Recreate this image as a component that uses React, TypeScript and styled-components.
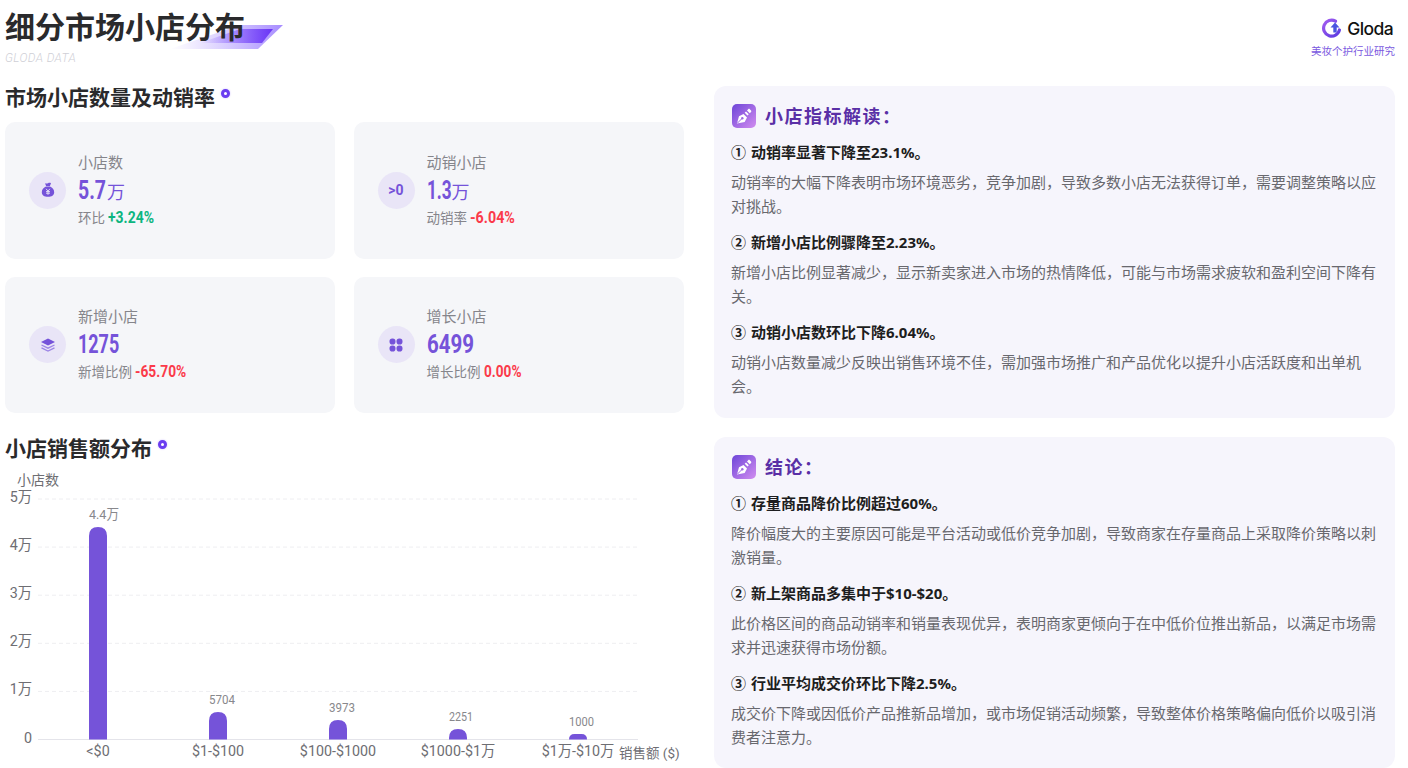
import React from "react";
import styled, { createGlobalStyle } from "styled-components";

const CJK = `"Noto Sans", "Noto Sans CJK SC", sans-serif`;
const NUM = `Roboto, "Noto Sans CJK SC", sans-serif`;

const Global = createGlobalStyle`
  html, body { margin: 0; padding: 0; background: #fff; overflow: hidden; }
  body { font-family: ${CJK}; }
  * { box-sizing: border-box; }
`;

const Page = styled.div`
  width: 1408px;
  height: 768px;
  padding: 0 13px 0 5px;
  display: flex;
  flex-direction: column;
  overflow: hidden;
`;
const Header = styled.header`
  height: 86px;
  display: flex;
  justify-content: space-between;
  align-items: flex-start;
`;
const TitleBlock = styled.div`
  position: relative;
  padding-top: 8px;
`;
const TitleDecor = styled.svg`
  position: absolute;
  left: 165px;
  top: 25px;
`;
const Title = styled.h1`
  position: relative;
  margin: 0;
  font-size: 30px;
  line-height: 38px;
  font-weight: 700;
  color: #2a2a2c;
`;
const SubTitle = styled.div`
  margin-top: 4px;
  font-family: Roboto, sans-serif;
  font-style: italic;
  font-weight: 300;
  font-size: 12px;
  line-height: 16px;
  letter-spacing: 0.4px;
  color: #cfcfd6;
`;
const Brand = styled.div`
  padding-top: 17px;
  display: flex;
  flex-direction: column;
  align-items: flex-end;
`;
const BrandRow = styled.div`
  display: flex;
  align-items: center;
  gap: 5px;
  height: 23px;
  margin-right: 2px;
`;
const BrandName = styled.span`
  font-family: Inter, sans-serif;
  font-weight: 500;
  font-size: 17.5px;
  letter-spacing: -0.6px;
  color: #111;
`;
const BrandSub = styled.div`
  margin-top: 4px;
  font-size: 10.5px;
  line-height: 15px;
  color: #7a58e0;
`;
const Columns = styled.div`
  flex: 1;
  display: grid;
  grid-template-columns: 679px 681px;
  column-gap: 30px;
`;
const Left = styled.div`
  display: flex;
  flex-direction: column;
`;
const SectionTitle = styled.h2`
  margin: 0;
  height: 22px;
  display: flex;
  align-items: center;
  gap: 6px;
  font-size: 21px;
  line-height: 22px;
  font-weight: 700;
  color: #2a2a2c;
`;
const Dot = styled.i`
  align-self: flex-start;
  margin-top: 2.5px;
  width: 9px;
  height: 9px;
  border-radius: 50%;
  border: 3px solid #6a3df0;
  background: #fff;
  box-shadow: 0 0 2px #c9b8ff;
`;
const Cards = styled.div`
  margin-top: 14px;
  display: grid;
  grid-template-columns: 330px 330.5px;
  grid-auto-rows: 136.5px;
  column-gap: 18.5px;
  row-gap: 18px;
`;
const Card = styled.div`
  background: #f5f6f9;
  border-radius: 10px;
  padding-left: 24px;
  display: flex;
  align-items: center;
  gap: 12px;
`;
const IconCircle = styled.div`
  flex: none;
  width: 37px;
  height: 37px;
  border-radius: 50%;
  background: #e9e5f7;
  color: #7553d9;
  display: flex;
  align-items: center;
  justify-content: center;
`;
const GtZero = styled.span`
  font-family: Roboto, sans-serif;
  font-size: 14px;
  font-weight: 700;
`;
const CardText = styled.div`
  display: flex;
  flex-direction: column;
  margin-top: -2px;
`;
const CardLabel = styled.div`
  font-size: 15px;
  line-height: 22px;
  color: #85858b;
`;
const CardValue = styled.div`
  display: flex;
  align-items: baseline;
  gap: 1px;
  height: 35px;
  line-height: 34px;
  color: #7553d9;
`;
const NarrowBox = styled.span<{ $w: number }>`
  display: inline-block;
  width: ${(p) => p.$w}px;
  white-space: nowrap;
`;
const NarrowText = styled.span<{ $sx: number }>`
  display: inline-block;
  transform: scaleX(${(p) => p.$sx});
  transform-origin: left center;
`;
const ValueNum = styled(NarrowBox)`
  font-family: ${NUM};
  font-size: 26px;
  font-weight: 700;
`;
const ValueUnit = styled.span`
  font-size: 18px;
  font-weight: 400;
`;
const CardSub = styled.div`
  display: flex;
  align-items: baseline;
  gap: 3px;
  font-size: 13.5px;
  line-height: 20px;
  color: #85858b;
`;
const Pct = styled(NarrowBox)<{ $up?: boolean }>`
  font-family: ${NUM};
  font-size: 16.5px;
  font-weight: 700;
  color: ${(p) => (p.$up ? "#0cb57f" : "#fb3a4a")};
`;
const ChartSection = styled.section`
  margin-top: 24px;
`;
const ChartSvg = styled.svg`
  display: block;
  margin-left: -5px;
  margin-top: 11px;
`;
const AxisText = styled.text<{ $size?: number }>`
  font-family: Roboto, "Noto Sans CJK SC", sans-serif;
  font-size: ${(p) => p.$size ?? 14.3}px;
  fill: #6e6e73;
`;
const ValueText = styled.text`
  font-family: ${NUM};
  font-size: 13.5px;
  fill: #88888c;
`;
const Right = styled.div`
  display: flex;
  flex-direction: column;
  gap: 19px;
`;
const Panel = styled.section`
  height: 331px;
  background: #f6f5fc;
  border-radius: 12px;
  padding: 18px 17px 0;
  &:first-child {
    height: 332px;
  }
`;
const PanelHeader = styled.div`
  display: flex;
  align-items: center;
  gap: 9px;
  height: 24px;
  margin: 0 0 12px 1px;
`;
const PanelTitle = styled.h3`
  margin: 0 0 2px;
  font-size: 18px;
  font-weight: 700;
  letter-spacing: 1.5px;
  color: #5a2fa6;
`;
const ItemHead = styled.div`
  font-size: 15px;
  line-height: 25px;
  font-weight: 700;
  color: #1d1d20;
  margin-bottom: 5px;
`;
const CircleNum = styled.span`
  display: inline-block;
  width: 20px;
`;
const ItemBody = styled.p`
  margin: 0 0 12px;
  font-size: 15px;
  line-height: 24px;
  color: #68686e;
`;

const Logo = () => (
  <svg width="21" height="21" viewBox="0 0 21 21">
    <defs>
      <linearGradient id="lg" x1="0" y1="0" x2="1" y2="1">
        <stop offset="0" stopColor="#a35cf0" />
        <stop offset="1" stopColor="#5a3ae0" />
      </linearGradient>
    </defs>
    <path d="M14.5 3.2A8 8 0 1 0 18.4 12" fill="none" stroke="url(#lg)" strokeWidth="3.2" strokeLinecap="round" />
    <path d="M14 4.500L9.500 9.500h2.800v5h3.400v-5h2.800z" fill="#4a55e0" />
  </svg>
);

const Bag = () => (
  <svg width="16" height="16" viewBox="0 0 16 16">
    <path d="M5 1.200c1 .5 2 .5 3 0s2-.5 3 0L9.900 4H6.100z" fill="currentColor" />
    <path d="M6 4.600h4c2.400 1 4.200 3.200 4.200 5.600 0 3-2.500 4.600-6.200 4.600s-6.200-1.600-6.200-4.600C1.800 7.800 3.600 5.600 6 4.600z" fill="currentColor" />
    <path d="M6.100 6.800L8 9.200l1.900-2.400M6 9.600h4M6 11.200h4M8 9.200v3.600" fill="none" stroke="#e9e5f7" strokeWidth="0.9" />
  </svg>
);
const Layers = () => (
  <svg width="16" height="16" viewBox="0 0 16 16">
    <path d="M8 1.500l7 3.500-7 3.500-7-3.500z" fill="currentColor" />
    <path d="M1.500 8L8 11.200 14.500 8M1.500 10.800L8 14l6.500-3.200" fill="none" stroke="#9d85e6" strokeWidth="1.300" />
  </svg>
);
const Blobs = () => (
  <svg width="14" height="14" viewBox="0 0 14 14" fill="currentColor">
    <rect x="0.500" y="0.500" width="6" height="6" rx="2.800" />
    <rect x="7.500" y="0.500" width="6" height="6" rx="2.800" />
    <rect x="0.500" y="7.500" width="6" height="6" rx="2.800" />
    <rect x="7.500" y="7.500" width="6" height="6" rx="2.800" />
  </svg>
);
const PenBadge = ({ id }: { id: string }) => (
  <svg width="24" height="24" viewBox="0 0 24 24">
    <defs>
      <linearGradient id={id} x1="0" y1="0" x2="1" y2="1">
        <stop offset="0" stopColor="#6d45d8" />
        <stop offset="1" stopColor="#d28df0" />
      </linearGradient>
    </defs>
    <rect width="24" height="24" rx="5" fill={`url(#${id})`} />
    <path d="M5 19.500l2-7.200 4.500-2.300 3.500 3.500-2.300 4.500z" fill="#fff" />
    <path d="M5.500 19l4.300-4.300" stroke="#9a68e4" strokeWidth="1" />
    <circle cx="10.300" cy="14.200" r="1.200" fill="#9a68e4" />
    <path d="M12.700 8.700l2.800 2.800 1.300-1.300-2.800-2.800zM15 6.400l2.800 2.800 1.200-1.200c.5-.5.500-1.100 0-1.600l-1.200-1.200c-.5-.5-1.100-.5-1.600 0z" fill="#fff" />
  </svg>
);

type CardData = {
  label: string;
  value: string;
  valueW: number;
  valueSx: number;
  unit?: string;
  sub: string;
  pct: string;
  pctW: number;
  pctSx: number;
  up?: boolean;
  icon: React.ReactNode;
};
const cards: CardData[] = [
  { label: "小店数", value: "5.7", valueW: 28, valueSx: 0.75, unit: "万", sub: "环比", pct: "+3.24%", pctW: 46, pctSx: 0.845, up: true, icon: <Bag /> },
  { label: "动销小店", value: "1.3", valueW: 24, valueSx: 0.66, unit: "万", sub: "动销率", pct: "-6.04%", pctW: 44, pctSx: 0.865, icon: <GtZero>&gt;0</GtZero> },
  { label: "新增小店", value: "1275", valueW: 41, valueSx: 0.69, sub: "新增比例", pct: "-65.70%", pctW: 50, pctSx: 0.835, icon: <Layers /> },
  { label: "增长小店", value: "6499", valueW: 47, valueSx: 0.79, sub: "增长比例", pct: "0.00%", pctW: 38, pctSx: 0.825, icon: <Blobs /> },
];

const panels = [
  {
    id: "p1",
    title: "小店指标解读：",
    items: [
      ["①", "动销率显著下降至23.1%。", "动销率的大幅下降表明市场环境恶劣，竞争加剧，导致多数小店无法获得订单，需要调整策略以应对挑战。"],
      ["②", "新增小店比例骤降至2.23%。", "新增小店比例显著减少，显示新卖家进入市场的热情降低，可能与市场需求疲软和盈利空间下降有关。"],
      ["③", "动销小店数环比下降6.04%。", "动销小店数量减少反映出销售环境不佳，需加强市场推广和产品优化以提升小店活跃度和出单机会。"],
    ],
  },
  {
    id: "p2",
    title: "结论：",
    items: [
      ["①", "存量商品降价比例超过60%。", "降价幅度大的主要原因可能是平台活动或低价竞争加剧，导致商家在存量商品上采取降价策略以刺激销量。"],
      ["②", "新上架商品多集中于$10-$20。", "此价格区间的商品动销率和销量表现优异，表明商家更倾向于在中低价位推出新品，以满足市场需求并迅速获得市场份额。"],
      ["③", "行业平均成交价环比下降2.5%。", "成交价下降或因低价产品推新品增加，或市场促销活动频繁，导致整体价格策略偏向低价以吸引消费者注意力。"],
    ],
  },
];

const bars = [
  { x: 98, top: 527, label: "4.4万", cat: "<$0", lx: 104, lw: 30 },
  { x: 218, top: 712, label: "5704", cat: "$1-$100", lx: 222, lw: 26 },
  { x: 338, top: 720, label: "3973", cat: "$100-$1000", lx: 342, lw: 26 },
  { x: 458, top: 729, label: "2251", cat: "$1000-$1万", lx: 461, lw: 24 },
  { x: 578, top: 734, label: "1000", cat: "$1万-$10万", lx: 581.500, lw: 25 },
];
const ticks = ["5万", "4万", "3万", "2万", "1万", "0"];
const Y0 = 470;

const Chart = () => (
  <ChartSvg width="690" height="298" viewBox={`0 ${Y0} 690 298`}>
    <AxisText x="17" y={485} $size={14}>小店数</AxisText>
    {ticks.map((t, i) => {
      const y = 499 + i * 48.1;
      return (
        <g key={t}>
          {i < 5 ? (
            <line x1="38" x2="638" y1={y} y2={y} stroke="#eeeef1" strokeWidth="1" strokeDasharray="4 3" />
          ) : (
            <line x1="38" x2="638" y1={739.5} y2={739.5} stroke="#e4e4ea" strokeWidth="1" />
          )}
          <AxisText x="32" y={y + 3} textAnchor="end">{t}</AxisText>
        </g>
      );
    })}
    {bars.map((b) => {
      const h = 739.5 - b.top;
      const r = Math.min(9, h);
      return (
        <g key={b.cat}>
          <path
            d={`M${b.x - 9} 739.5V${b.top + r}Q${b.x - 9} ${b.top} ${b.x - 9 + r} ${b.top}H${b.x + 9 - r}Q${b.x + 9} ${b.top} ${b.x + 9} ${b.top + r}V739.5Z`}
            fill="#7553d9"
          />
          <ValueText x={b.lx} y={b.top - 8} textAnchor="middle" textLength={b.lw} lengthAdjust="spacingAndGlyphs">{b.label}</ValueText>
          <AxisText x={b.x} y={756} textAnchor="middle">{b.cat}</AxisText>
        </g>
      );
    })}
    <AxisText x="619" y="758" $size={13.5}>销售额 ($)</AxisText>
  </ChartSvg>
);

export default function App() {
  return (
    <>
      <Global />
      <Page>
        <Header>
          <TitleBlock>
            <TitleDecor width="114" height="25" viewBox="0 0 114 25">
              <defs>
                <linearGradient id="d1" x1="0" x2="1" y1="0" y2="0">
                  <stop offset="0" stopColor="#b9a5ff" stopOpacity="0" />
                  <stop offset="1" stopColor="#a78cff" />
                </linearGradient>
                <linearGradient id="d2" x1="0" x2="1" y1="0" y2="0">
                  <stop offset="0" stopColor="#7a4cff" stopOpacity="0" />
                  <stop offset="1" stopColor="#6a35f5" />
                </linearGradient>
              </defs>
              <path d="M0 24L70 0H113L88 24z" fill="url(#d1)" />
              <path d="M30 18L70 4H103L92 18z" fill="url(#d2)" />
            </TitleDecor>
            <Title>细分市场小店分布</Title>
            <SubTitle>GLODA DATA</SubTitle>
          </TitleBlock>
          <Brand>
            <BrandRow>
              <Logo />
              <BrandName>Gloda</BrandName>
            </BrandRow>
            <BrandSub>美妆个护行业研究</BrandSub>
          </Brand>
        </Header>
        <Columns>
          <Left>
            <SectionTitle>
              市场小店数量及动销率
              <Dot />
            </SectionTitle>
            <Cards>
              {cards.map((c) => (
                <Card key={c.label}>
                  <IconCircle>{c.icon}</IconCircle>
                  <CardText>
                    <CardLabel>{c.label}</CardLabel>
                    <CardValue>
                      <ValueNum $w={c.valueW}>
                        <NarrowText $sx={c.valueSx}>{c.value}</NarrowText>
                      </ValueNum>
                      {c.unit && <ValueUnit>{c.unit}</ValueUnit>}
                    </CardValue>
                    <CardSub>
                      {c.sub}
                      <Pct $w={c.pctW} $up={c.up}>
                        <NarrowText $sx={c.pctSx}>{c.pct}</NarrowText>
                      </Pct>
                    </CardSub>
                  </CardText>
                </Card>
              ))}
            </Cards>
            <ChartSection>
              <SectionTitle>
                小店销售额分布
                <Dot />
              </SectionTitle>
              <Chart />
            </ChartSection>
          </Left>
          <Right>
            {panels.map((p) => (
              <Panel key={p.id}>
                <PanelHeader>
                  <PenBadge id={p.id} />
                  <PanelTitle>{p.title}</PanelTitle>
                </PanelHeader>
                {p.items.map(([n, h, b]) => (
                  <div key={h}>
                    <ItemHead>
                      <CircleNum>{n}</CircleNum>
                      {h}
                    </ItemHead>
                    <ItemBody>{b}</ItemBody>
                  </div>
                ))}
              </Panel>
            ))}
          </Right>
        </Columns>
      </Page>
    </>
  );
}
